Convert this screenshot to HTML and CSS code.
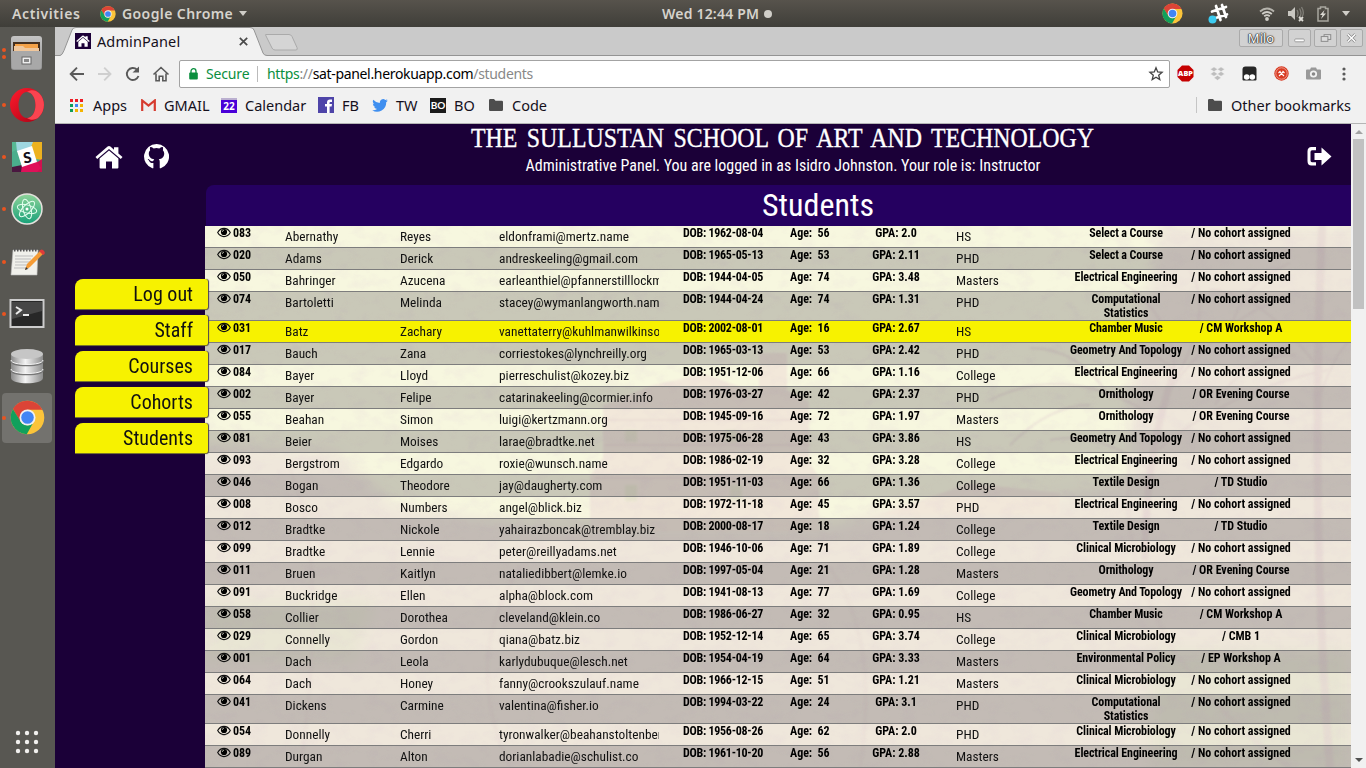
FILE: index.html
```html
<!DOCTYPE html>
<html lang="en">
<head>
<meta charset="utf-8">
<title>AdminPanel</title>
<link rel="stylesheet" href="styles.css">
</head>
<body>
<svg class="defs" width="0" height="0">
  <defs>
    <symbol id="chrome" viewBox="0 0 48 48">
      <circle cx="24" cy="24" r="23" fill="#fbc43a"/>
      <path d="M4 12.5A23 23 0 0 1 44.5 13.5H24L14 29.5Z" fill="#dc4437"/>
      <path d="M4 12.5L14.5 29.5A11 11 0 0 0 32 31L23 47A23 23 0 0 1 4 12.5Z" fill="#12a05c"/>
      <circle cx="24" cy="24" r="11" fill="#f1f1f1"/>
      <circle cx="24" cy="24" r="8.6" fill="#4285f4"/>
    </symbol>
    <symbol id="house" viewBox="0 0 28 24">
      <path d="M14 5.5L4.6 13.5V22.6a1 1 0 0 0 1 1H11V16.5h6V23.6h5.4a1 1 0 0 0 1-1V13.5Z"/>
      <path d="M12.6 1.600a2.200 2.200 0 0 1 2.800 0L19 4.700V2.300h4.400V8.400l4.100 3.500-1.700 2L14 3.900 2.200 13.900.5 11.900Z"/>
    </symbol>
    <symbol id="eye" viewBox="0 0 14 10">
      <path d="M.7 5Q3 .9 7 .9T13.300 5Q11 9.100 7 9.100T.7 5Z" fill="none" stroke="#111" stroke-width="1.150"/>
      <circle cx="7" cy="4.500" r="3.100" fill="#000"/>
      <path d="M5.300 4.300Q5.400 2.900 6.900 2.700" fill="none" stroke="#e8e8d8" stroke-width=".8"/>
    </symbol>
    <symbol id="folder" viewBox="0 0 14 12"><path d="M1.200 0H5l1.500 1.800h6.300A1.200 1.200 0 0 1 14 3v7.800A1.200 1.200 0 0 1 12.800 12H1.200A1.200 1.200 0 0 1 0 10.800V1.200A1.200 1.200 0 0 1 1.200 0Z" fill="#4d4d4d"/></symbol>
    <linearGradient id="metal" x1="0" x2="1"><stop offset="0" stop-color="#8a8a8a"/><stop offset=".45" stop-color="#f4f4f4"/><stop offset="1" stop-color="#8c8c8c"/></linearGradient>
    <linearGradient id="steel" x2="0" y2="1"><stop offset="0" stop-color="#c4c4c4"/><stop offset="1" stop-color="#929292"/></linearGradient>
    <linearGradient id="red" x2="1" y2="1"><stop offset="0" stop-color="#ff1b2d"/><stop offset="1" stop-color="#a70014"/></linearGradient>
    <linearGradient id="atom" x2="0" y2="1"><stop offset="0" stop-color="#8fd49a"/><stop offset="1" stop-color="#18a179"/></linearGradient>
  </defs>
</svg>

<div class="topbar">
  <span class="activities">Activities</span>
  <svg class="tb-chrome" width="16" height="16"><use href="#chrome"/></svg>
  <span class="appname">Google Chrome</span>
  <i class="caret"></i>
  <span class="clock">Wed 12:44 PM</span><i class="clock-dot"></i>
  <div class="tray">
    <svg class="t1" width="21" height="21"><use href="#chrome"/></svg>
    <svg class="t2" width="21" height="21" viewBox="0 0 21 21"><g stroke="#fff" stroke-width="2.700" stroke-linecap="round"><path d="M8 3l4.500 14M14 2l4 12M4 8.500l14-4.500M6 15.500l13-4"/></g><circle cx="4.500" cy="16.500" r="4" fill="#3ccbf0"/></svg>
    <svg class="t3" width="16" height="14" viewBox="0 0 16 14" fill="none" stroke="#d0cec8" stroke-width="1.800"><path d="M1 4.500Q8-1.500 15 4.500" stroke="#b5b3ac"/><path d="M3.200 7Q8 3 12.800 7M5.200 9.300Q8 7 10.800 9.300"/><circle cx="8" cy="12" r="1" fill="#d0cec8"/></svg>
    <svg class="t4" width="18" height="16" viewBox="0 0 18 16"><path d="M1 5h3l4-4v13l-4-4H1Z" fill="#c9c7c1"/><path d="M10 4q2 3 0 7M12.500 2.500q3 5 0 9M14.500 1q3 5 1 9" stroke="#817f78" fill="none" stroke-width="1.300"/><path d="M12 11l4 4m0-4l-4 4" stroke="#dedcd6" stroke-width="1.800"/></svg>
    <svg class="t5" width="12" height="16" viewBox="0 0 12 16"><path d="M1 2.500h2.500V1h5v1.500H11V15H1Z" fill="none" stroke="#a8a69f" stroke-width="1.500"/><path d="M7.500 4L3 9h2.500L4 13l5-5.500H6.300Z" fill="#dddbd5"/></svg>
    <i class="caret t6"></i>
  </div>
</div>

<div class="desktop">
  <nav class="dock">
    <div class="app two"><svg width="34" height="36" viewBox="0 0 34 36"><rect x="1" y="1" width="31" height="34" rx="3" fill="url(#steel)"/><rect x="3" y="7" width="27" height="10" fill="#46301f"/><path d="M5 9h23v6H5Z" fill="#f5a248"/><path d="M4 11h9l2 2h14v4H4Z" fill="#f0c79c"/><rect x="2" y="16" width="29" height="18" rx="1.500" fill="#a8a8a8"/><rect x="12" y="22" width="9" height="7" fill="#eee" stroke="#666"/><rect x="14" y="24" width="5" height="3" fill="#888"/></svg></div>
    <div class="app dot"><svg width="36" height="36" viewBox="0 0 36 36"><path fill-rule="evenodd" fill="url(#red)" d="M18 1a17 17 0 1 0 0 34A17 17 0 1 0 18 1ZM18 5c5 0 8.500 6 8.500 13s-3.500 13-8.500 13-8.500-6-8.500-13S13 5 18 5Z"/><path d="M18 5c5 0 8.500 6 8.500 13s-3.500 13-8.500 13c4 3 9 2 12-1a17 17 0 0 0 0-24c-3-3-8-4-12-1Z" fill="#fb4450"/></svg></div>
    <div class="app dot"><svg width="30" height="30" viewBox="0 0 30 30"><rect width="30" height="30" rx="2" fill="#4aae8c"/><path d="M0 0h9l-3 7-6 3Z" fill="#57b894"/><path d="M4 0h18l-2 6-15 4Z" fill="#9ed7e0"/><path d="M21 0h9v18l-6-1-5-12Z" fill="#edb21f"/><path d="M30 17v13H19l5-9Z" fill="#cf124f"/><path d="M8 24l16-6 5 8-4 4H9Z" fill="#df1159"/><path d="M0 25l10-2-1 7H0Z" fill="#4a1740"/><path d="M5 9l15-5 5 16-15 5Z" fill="#fff"/></svg><b class="slack-s">S</b></div>
    <div class="app dot"><svg width="32" height="32" viewBox="0 0 32 32"><circle cx="16" cy="16" r="15" fill="url(#atom)" stroke="#e5e2de" stroke-width="1.500"/><g fill="none" stroke="#e5fff0" stroke-width="1"><ellipse cx="16" cy="16" rx="10" ry="4" transform="rotate(15 16 16)"/><ellipse cx="16" cy="16" rx="10" ry="4" transform="rotate(75 16 16)"/><ellipse cx="16" cy="16" rx="10" ry="4" transform="rotate(135 16 16)"/></g><circle cx="16" cy="16" r="1.500" fill="#fff"/></svg></div>
    <div class="app dot"><svg width="36" height="30" viewBox="0 0 36 30"><path d="M4 3h25l-1 25H2Z" fill="#f0f0eb" stroke="#bbb" stroke-width=".6"/><path d="M5 3h23" stroke="#555" stroke-width="3" stroke-dasharray="1.500 1.500"/><path d="M6 9h18M6 12h16M6 15h18M6 18h12M5 21h15" stroke="#bdbdbd"/><path d="M16 23l2-6L31 4l3 3-13 13Z" fill="#f59b35"/><path d="M30 4q3-3 5 0t-1 4Z" fill="#df3b3b"/><path d="M16 23l1-3 2 2Z" fill="#333"/></svg></div>
    <div class="app dot"><svg width="36" height="30" viewBox="0 0 36 30"><rect x="1.500" y="1" width="33" height="27" fill="#272727" stroke="#ccc" stroke-width="2"/><path d="M3 3h30v9L3 20Z" fill="#464646"/><path d="M7 8l5 3-5 4M14 16h6" stroke="#e9e9e9" stroke-width="2" fill="none"/></svg></div>
    <div class="app"><svg width="34" height="36" viewBox="0 0 34 36"><path d="M1 6v24c0 7 32 7 32 0V6Z" fill="url(#metal)"/><path d="M1 13c0 6 32 6 32 0M1 22c0 6 32 6 32 0" stroke="#777" stroke-width="1.600" fill="none"/><path d="M1 12c0 6 32 6 32 0M1 21c0 6 32 6 32 0" stroke="#f4f4f4" fill="none"/><ellipse cx="17" cy="6" rx="16" ry="5" fill="#c6c6c6"/></svg></div>
    <div class="app dot active"><svg width="35" height="35"><use href="#chrome"/></svg></div>
    <svg class="grid9" width="24" height="24" viewBox="0 0 24 24" fill="#f2f1ef"><circle cx="3" cy="3" r="2.200"/><circle cx="12" cy="3" r="2.200"/><circle cx="21" cy="3" r="2.200"/><circle cx="3" cy="12" r="2.200"/><circle cx="12" cy="12" r="2.200"/><circle cx="21" cy="12" r="2.200"/><circle cx="3" cy="21" r="2.200"/><circle cx="12" cy="21" r="2.200"/><circle cx="21" cy="21" r="2.200"/></svg>
  </nav>

  <main class="browser">
    <div class="tabstrip">
      <svg class="tabshape" width="250" height="29" viewBox="0 0 250 29"><path d="M0 29V28.500Q2 28.500 4 23.500L12 3q1-2.500 4-2.500H190q3 0 4 2.500l9 23q1 2.500 4 2.500h43V29Z" fill="#f1f1f1"/><path d="M0 28.500Q2 28.500 4 23.500L12 3q1-2.500 4-2.500H190q3 0 4 2.500l9 23q1 2.500 4 2.500h43" fill="none" stroke="#949494"/><path d="M206 7.500h23q2 0 3 2l5 11q1 2.500-1 2.500H215q-2 0-3-2l-6-12q-1-2 0-1.500Z" fill="#d5d5d5" stroke="#aaa"/></svg>
      <span class="favicon"><svg width="14" height="12" fill="#fff"><use href="#house"/></svg></span>
      <span class="tabtitle">AdminPanel</span>
      <svg class="tabx" width="9" height="9" viewBox="0 0 9 9" stroke="#4a4a4a" stroke-width="1.700"><path d="M.8.800l7.400 7.400M8.200.800L.8 8.200"/></svg>
      <div class="wincontrols"><span class="milo">Milo</span>
        <span class="wbtn"><svg width="22" height="16" viewBox="0 0 22 16"><rect x="6" y="9" width="10" height="3" rx="1" fill="#fff" stroke="#999" stroke-width="1"/></svg></span>
        <span class="wbtn"><svg width="22" height="16" viewBox="0 0 22 16" fill="#ddd" stroke="#888"><rect x="9.500" y="4.500" width="7" height="5"/><rect x="6.500" y="6.500" width="7" height="5"/></svg></span>
        <span class="wbtn"><svg width="22" height="16" viewBox="0 0 22 16"><path d="M7 4l8 8M15 4l-8 8" stroke="#888" stroke-width="3"/><path d="M7 4l8 8M15 4l-8 8" stroke="#fff" stroke-width="1.500"/></svg></span></div>
    </div>
    <div class="toolbar">
      <svg class="nav" width="104" height="20" viewBox="0 0 104 20" fill="none" stroke="#5a5a5a" stroke-width="1.900"><path d="M17 10H4M10 3.700L3.700 10 10 16.300"/><path d="M31 10h12M37.200 3.700L43.500 10l-6.300 6.300" stroke="#cfcfcf"/><path d="M70 5.600A6 6 0 1 0 71.500 12"/><path d="M65.500 8.500H72V2.500Z" fill="#5a5a5a" stroke="none"/><path d="M86.500 10.500L94 3.500l7.500 7M89 9.500v7.300h3.200v-4.500h3.600v4.500H99V9.500" stroke-width="1.600"/></svg>
      <div class="omnibox">
        <svg width="9" height="12" viewBox="0 0 9 12"><path d="M2 5V3.200a2.500 2.500 0 0 1 5 0V5" fill="none" stroke="#0a8f3e" stroke-width="1.300"/><rect x="0.200" y="4.500" width="8.600" height="7" rx="1" fill="#0a8f3e"/></svg>
        <span class="secure">Secure</span><i class="sep"></i>
        <span class="url"><span class="g">https</span><span class="gr">://</span>sat-panel.herokuapp.com<span class="gr">/students</span></span>
        <svg class="star" width="16" height="16" viewBox="0 0 16 16"><path d="M8 1.800l1.700 4.100 4.400.4-3.400 2.900 1.100 4.400L8 11.300l-3.800 2.300 1.100-4.400L1.900 6.300l4.400-.4Z" fill="none" stroke="#444" stroke-width="1.300"/></svg>
      </div>
      <div class="exts">
        <svg width="17" height="17" viewBox="0 0 17 17"><path d="M5 .5h7L16.500 5v7L12 16.500H5L.5 12V5Z" fill="#c60000"/><text x="8.500" y="11.300" text-anchor="middle" font-family="Open Sans" font-weight="800" font-size="7.300" fill="#fff">ABP</text></svg>
        <svg width="15" height="14" viewBox="0 0 15 14" fill="#bdbdbd"><path d="M4 0l3.500 2.300L4 4.600.5 2.300ZM11 0l3.500 2.300L11 4.600 7.500 2.300ZM4 4.600l3.500 2.300L4 9.200.5 6.900ZM11 4.600l3.500 2.300L11 9.200 7.500 6.900ZM7.500 8.500l3.500 2.300-3.500 2.500L4 10.800Z" stroke="#f1f1f1" stroke-width=".4"/></svg>
        <svg width="15" height="15" viewBox="0 0 15 15"><path d="M3.500.5h8q3 0 3 3v10q0 1-1 1h-12q-1 0-1-1v-10q0-3 3-3Z" fill="#272727"/><circle cx="4.700" cy="11" r="2.800" fill="#fff"/><circle cx="10.300" cy="11" r="2.800" fill="#fff"/></svg>
        <svg width="15" height="15" viewBox="0 0 15 15"><circle cx="7.500" cy="7.500" r="7.200" fill="#d83a22"/><circle cx="7.500" cy="7.500" r="5.700" fill="none" stroke="#f3b3a5" stroke-width=".8"/><path d="M5 10l4.500-4.500m.5 4.500L5.500 5.500M4.500 7l2-2m4 2l-2-2" stroke="#fff" stroke-width="1.100"/></svg>
        <svg width="15" height="13" viewBox="0 0 15 13"><path d="M1 2.500h3L5 .5h5l1 2h3q1 0 1 1v8q0 1-1 1H1q-1 0-1-1v-8q0-1 1-1Z" fill="#999"/><circle cx="7.500" cy="7" r="3.600" fill="#f1f1f1"/><circle cx="7.500" cy="7" r="1.800" fill="#888"/></svg>
        <svg class="dots" width="4" height="14" viewBox="0 0 4 14" fill="#5a5a5a"><circle cx="2" cy="2" r="1.600"/><circle cx="2" cy="7" r="1.600"/><circle cx="2" cy="12" r="1.600"/></svg>
      </div>
    </div>
    <div class="bookmarks">
      <span class="bm b1"><svg width="13" height="13" viewBox="0 0 13 13"><path d="M0 1.500h13" stroke="#ee1c25" stroke-width="3" stroke-dasharray="3 2"/><path d="M0 6.500h3" stroke="#0f9d58" stroke-width="3"/><path d="M5 6.500h3" stroke="#4285f4" stroke-width="3"/><path d="M10 6.500h3" stroke="#f4b400" stroke-width="3"/><path d="M0 11.500h3" stroke="#0f9d58" stroke-width="3"/><path d="M5 11.500h8" stroke="#f4b400" stroke-width="3" stroke-dasharray="3 2"/></svg><span>Apps</span></span>
      <span class="bm b2"><svg width="15" height="12" viewBox="0 0 15 12"><rect width="15" height="12" rx="1" fill="#eee"/><path d="M1.200 12V1.500l6.300 5 6.300-5V12" fill="none" stroke="#d63b2f" stroke-width="2.200"/></svg><span>GMAIL</span></span>
      <span class="bm b3"><svg width="16" height="15" viewBox="0 0 16 15"><path d="M0 1h16v14H0Z" fill="#4a00d8"/><path d="M0 0h16v2H0Z" fill="#bbb0d0"/><text x="8" y="12" text-anchor="middle" font-family="Open Sans" font-weight="700" font-size="10" fill="#fff">22</text></svg><span>Calendar</span></span>
      <span class="bm b4"><svg width="16" height="16" viewBox="0 0 16 16"><rect width="16" height="16" fill="#4e44a8"/><path d="M9 16V9.500H7V7h2V5.500Q9 2.500 12 2.500h2V5h-1.500q-1 0-1 1v1H14l-.4 2.500h-2V16Z" fill="#fff"/></svg><span>FB</span></span>
      <span class="bm b5"><svg width="16" height="13" viewBox="0 0 24 20"><path d="M24 2.400a10 10 0 0 1-2.800.8A5 5 0 0 0 23.300.4a10 10 0 0 1-3.100 1.200 5 5 0 0 0-8.400 4.500A14 14 0 0 1 1.700 1a5 5 0 0 0 1.500 6.500 5 5 0 0 1-2.200-.6 5 5 0 0 0 4 4.900 5 5 0 0 1-2.200.1 5 5 0 0 0 4.600 3.400A10 10 0 0 1 0 17.400 14 14 0 0 0 21.500 4.900 10 10 0 0 0 24 2.400Z" fill="#3f8ff0"/></svg><span>TW</span></span>
      <span class="bm b6"><svg width="16" height="15" viewBox="0 0 16 15"><rect width="16" height="15" fill="#1b1b1b"/><text x="8" y="11.300" text-anchor="middle" font-family="Lato" font-weight="700" font-size="10" fill="#fff">BO</text></svg><span>BO</span></span>
      <span class="bm b7"><svg width="14" height="12"><use href="#folder"/></svg><span>Code</span></span>
      <span class="bm other"><svg width="14" height="12"><use href="#folder"/></svg><span>Other bookmarks</span></span>
    </div>

    <div class="viewport">
      <div class="page">
        <header class="sitehead">
          <div class="headicons"><svg width="28" height="24" fill="#fff"><use href="#house"/></svg>
            <svg width="25" height="25" viewBox="0 0 24 24"><path fill="#fff" d="M12 0a12 12 0 0 0-4 23.300c.8.200 1-.2 1-.6v-4.500c-2.200.3-3.200-.4-4-2-.3-.6-1-1-1.200-1.300-.5-.4.5-.6 1.100-.1 1 .7 1.200 2.200 4 1.500.1-.8.500-1.300 1-1.600-3.300-.4-5.300-2-5.300-5.500 0-1.300.5-2.400 1.300-3.300-.3-1-.3-2 .1-3 1.300 0 2.300.6 3.200 1.300a12 12 0 0 1 5.600 0c.9-.7 1.900-1.300 3.200-1.300.4 1 .4 2 .1 3 .8.900 1.300 2 1.300 3.300 0 3.500-2 5.100-5.300 5.500.7.500 1 1.300 1 2.400v5.600c0 .4.200.8 1 .6A12 12 0 0 0 12 0Z"/></svg></div>
          <div class="headtext">
            <svg class="title" width="626" height="32" viewBox="0 0 626 32"><text x="1" y="23" textLength="623" lengthAdjust="spacingAndGlyphs">THE SULLUSTAN SCHOOL OF ART AND TECHNOLOGY</text></svg>
            <p class="sub">Administrative Panel. You are logged in as Isidro Johnston. Your role is: Instructor</p>
          </div>
          <svg class="logout" width="25" height="19" viewBox="0 0 25 19" fill="#fff"><path d="M9 0v3.200H5Q3.500 3.200 3.500 5v8.500q0 1.800 1.500 1.800h4v3.200H4.500Q.5 18.500.5 14V4.500Q.5 0 4.500 0Z"/><path d="M14.500.500L24.500 9.500 14.500 18.500V13H7.500V6h7Z"/></svg>
        </header>
        <div class="body">
          <nav class="side"><a>Log out</a><a>Staff</a><a>Courses</a><a>Cohorts</a><a>Students</a></nav>
          <section class="content">
            <h2><span>Students</span></h2>
            <div class="rows">
              <svg class="photo" width="1146" height="542" viewBox="205 226 1146 542" preserveAspectRatio="none">
                <defs><filter id="soft" x="-10%" y="-10%" width="120%" height="120%"><feGaussianBlur stdDeviation="7"/></filter><filter id="soft1"><feGaussianBlur stdDeviation=".8"/></filter>
                <filter id="grain" x="0" y="0" width="100%" height="100%"><feTurbulence type="fractalNoise" baseFrequency=".06 .09" numOctaves="4" seed="8"/><feColorMatrix values="0 0 0 0 .75  0 0 0 0 .62  0 0 0 0 .68  1.600 0 0 0 -.72"/></filter></defs>
                <rect x="205" y="226" width="1146" height="542" fill="#f7f7df"/>
                <path d="M205 445l130 5 60 55 140 20 300 0 65-20 100 0 130-20 0-110 20-100 10-50 240 0v580H180V445Z" fill="#efe7db" filter="url(#soft)"/>
                <path d="M205 600h170l-20 60H205Z M1150 650h200v120h-200Z" fill="#e9e6d4" filter="url(#soft)"/>
                <g fill="#f2e8da" filter="url(#soft1)"><path d="M603 405l50-20 52-11 44 16 10 0v-37h28v37l22 12v60l10 15v55H590v-55l13-20Z"/><path d="M880 515l90-32 90 10v22Z"/><path d="M605 445h205M595 478h220M605 420h205" stroke="#ecddd5" stroke-width="2"/><path d="M625 430h12v12h-12ZM725 430h12v12h-12ZM625 485h12v16h-12ZM730 485h12v16h-12Z" fill="#e8e5cf"/></g>
                <g stroke="#e5d6d2" fill="none" opacity=".6" filter="url(#soft1)"><path d="M1330 768q-20-250-8-542" stroke-width="8"/><path d="M1145 560q0-110 30-190" stroke-width="7"/><path d="M1175 370q-60-50-150-45M1170 390q50-70 110-90M1160 420q-90-60-170-20M1158 450q70-60 170-80M1174 370q0-60-70-100M1175 380q40-70 15-110M1320 370q-60-80-110-80M1315 410q20-60 36-70M1150 470q-50-40-100-30M1110 398q-30-50-80-50M1230 333q10-50 60-70M1090 405q-40 0-80 40M1215 405q30-50 80-50" stroke-width="1.800"/><path d="M300 768q30-200-10-300M510 768q-50-110 10-200M860 768q20-130-30-200M1290 768q-180-130-160-310" stroke-width="4" opacity=".4"/></g>
                <path d="M1020 226h331v330h-290Z M205 430h130l60 75H205Z M205 520h1146v248H205Z" filter="url(#grain)" opacity=".28"/>
              </svg>
              <div class="list" id="list"></div>
            </div>
          </section>
        </div>
      </div>
      <div class="scroll"><i class="up"></i><i class="thumb"></i><i class="down"></i></div>
    </div>
  </main>
</div>
<script src="rows.js"></script>
</body>
</html>
```
FILE: styles.css
```css
* { box-sizing: border-box; }
html, body { margin: 0; height: 768px; overflow: hidden; }
body { font-family: "Noto Sans", sans-serif; font-size: 14.500px; color: #15101c; }
.defs { position: absolute; }
svg { flex: none; display: block; }
i { flex: none; }

.topbar { height: 27px; display: flex; align-items: center; position: relative; background: linear-gradient(#57534c, #3f3e39); color: #d6d3cc; font-weight: 600; font-size: 14px; padding-left: 12px; }
.activities { width: 89px; letter-spacing: .6px; }
.tb-chrome { margin: 0 6px 0 -1px; }
.appname { width: 113px; white-space: nowrap; letter-spacing: .4px; }
.caret { border: 4.500px solid transparent; border-top: 5px solid #d0cec8; border-bottom: 0; margin-left: 4px; }
.clock { margin-left: 415px; width: 98px; white-space: nowrap; letter-spacing: .2px; }
.clock-dot { width: 8px; height: 8px; border-radius: 50%; background: #d0cec8; margin-left: 4px; }
.tray { margin-left: auto; display: flex; align-items: center; padding-right: 16px; }
.t1 { margin-right: 25px; } .t2 { margin-right: 30px; } .t3 { margin-right: 12px; } .t4 { margin-right: 12px; } .t5 { margin-right: 9px; }

.desktop { display: flex; height: 741px; }
.dock { width: 55px; background: #585752; display: flex; flex-direction: column; align-items: center; position: relative; padding: 1px 1px 0 0; }
.app { height: 50px; width: 50px; margin-bottom: 2.150px; display: flex; align-items: center; justify-content: center; position: relative; border-radius: 4px; }
.app.active { background: #73726e; }
.dot::before, .two::before { content: ""; position: absolute; left: 0; top: 23px; width: 4px; height: 4px; border-radius: 50%; background: #e95420; }
.two::before { top: 20px; box-shadow: 0 7px #e95420; }
.slack-s { position: absolute; font: 900 15px Lato, sans-serif; transform: rotate(-8deg); }
.grid9 { margin-top: auto; margin-bottom: 14px; }

.browser { flex: 1; min-width: 0; display: flex; flex-direction: column; background: #f1f1f1; }
.tabstrip { height: 29px; background: #cacaca; border-bottom: 1px solid #949494; display: flex; align-items: center; position: relative; }
.tabshape { position: absolute; left: 5px; top: 0; }
.favicon { position: relative; width: 16px; height: 16px; background: #1c0038; margin-left: 20px; display: flex; align-items: center; justify-content: center; }
.tabtitle { position: relative; margin-left: 6px; width: 142px; letter-spacing: .1px; }
.tabx { position: relative; }
.wincontrols { margin-left: auto; display: flex; gap: 3px; padding-right: 3px; margin-bottom: 7px; margin-top: 1px; }
.milo, .wbtn { height: 18px; border: 1px solid #aaa; border-radius: 2px; background: #d2d2d2; }
.milo { width: 44px; margin-right: 2px; text-align: center; font-size: 13px; line-height: 16px; color: #fff; text-shadow: 0 0 1px #222, 0 0 1px #222, 0 0 2px #333, 0 0 1px #333; }
.wbtn { width: 23px; } .wbtn svg { width: 21px; }
.toolbar { height: 36px; display: flex; align-items: center; padding: 0 0 1px 12px; }
.nav { margin-right: 8px; }
.omnibox { width: 991px; height: 28px; background: #fff; border: 1px solid #a3a3a3; border-radius: 2px; display: flex; align-items: center; padding: 0 5px 0 9px; white-space: nowrap; font-size: 14px; }
.secure { color: #0a8f3e; margin-left: 8px; width: 43px; letter-spacing: -.15px; }
.sep { width: 1px; height: 16px; background: #bbb; margin: 0 9px 0 8px; }
.g { color: #0a8f3e; } .gr { color: #888; }
.url { letter-spacing: -.33px; color: #000; }
.star { margin-left: auto; }
.exts { display: flex; align-items: center; margin-left: 7px; gap: 17px; }
.exts svg:nth-child(2) { margin-left: -1px; }
.dots { margin-left: 4px; }
.bookmarks { height: 32px; border-bottom: 1px solid #b5b5b5; display: flex; align-items: center; padding: 0 14px 5px 15px; }
.bm { display: flex; align-items: center; white-space: nowrap; }
.bm svg { margin-right: 8px; }
.b1 { width: 71px; } .b1 svg { margin-right: 10px; }
.b2 { width: 80px; } .b3 { width: 97px; } .b4 { width: 54px; } .b5 { width: 58px; } .b6 { width: 59px; }
.b7 svg { margin-right: 9px; }
.other { margin-left: auto; border-left: 1px solid #c5c5c5; padding-left: 11px; height: 16px; margin-right: 1px; }
.other svg { margin-right: 9px; }

.viewport { flex: 1; min-height: 0; display: flex; overflow: hidden; }
.page { width: 1296px; background: #1b0038; font-family: "Roboto Condensed", Roboto, sans-serif; font-stretch: condensed; }
.sitehead { height: 61px; display: grid; grid-template-columns: 256px 1fr 96px; color: #fff; }
.headicons { display: flex; gap: 21px; padding: 20px 0 0 40px; align-items: center; height: 45px; }
.headtext { display: flex; flex-direction: column; align-items: center; }
.title text { font: 27px "Liberation Serif", serif; word-spacing: 4px; fill: #fff; stroke: #fff; stroke-width: .35px; }
.sub { margin: 0; font-size: 16px; line-height: 20px; white-space: nowrap; }
.logout { margin: 23px 0 0 52px; }
.body { display: flex; }
.side { width: 150px; padding: 94px 0 0 20px; display: flex; flex-direction: column; gap: 5px; position: relative; z-index: 1; }
.side a { width: 133px; height: 31px; background: #f7f200; border-radius: 8px 3px 3px 0; border-bottom: 1px solid #78722a; box-shadow: 1px 0 1px #4a3f50; font-size: 20px; line-height: 30px; text-align: right; padding-right: 15px; color: #111; }
.content { flex: 1; min-width: 0; }
h2 { margin: 0 0 0 1px; height: 41px; background: #250060; border-radius: 8px 0 0 0; color: #fff; font-weight: 400; font-size: 32px; line-height: 40px; text-align: center; padding-left: 79px; }
.rows { position: relative; height: 542px; overflow: hidden; }
.photo { position: absolute; left: 0; top: 0; }
.list { position: relative; color: #111; }
.row { display: grid; grid-template-columns: 80px 115px 99px 160px 128px 49px 120px 112px 116px 114px; height: 22px; border-bottom: 1px solid #7d7d7d; white-space: nowrap; font-size: 13.330px; line-height: 22px; }
.row.tall { height: 29px; }
.row:nth-child(even) { background: rgba(15, 10, 25, .195); }
.row.sel { background: #f7f200; }
.row .b { font-weight: 700; font-size: 12px; line-height: 14px; text-align: center; color: #000; letter-spacing: -.03px; }
.row .course { letter-spacing: -.1px; }
.row .dob { letter-spacing: -.26px; }
.row .id { display: flex; align-items: flex-start; padding-left: 11px; }
.id svg { margin: 1px 2px 0 1px; }
.row .age { text-align: left; padding-left: 3px; white-space: pre; }
.mail { overflow: hidden; height: 22px; }

.scroll { width: 15px; background: #f1f1f1; display: flex; flex-direction: column; align-items: center; }
.up { border: 4px solid transparent; border-bottom-color: #a3a3a3; border-top: 0; margin-top: 6px; }
.thumb { width: 11px; height: 170px; background: #c1c1c1; margin-top: 5px; }
.down { border: 4px solid transparent; border-top-color: #505050; border-bottom: 0; margin-top: auto; margin-bottom: 6px; }
```
FILE: rows.js
```js
const N = "No cohort assigned", S = "Select a Course", EE = "Electrical Engineering", GT = "Geometry And Topology",
  CM = "Clinical Microbiology", CS = "Computational<br>Statistics", O = "Ornithology", T = "Textile Design", OE = "OR Evening Course";
const data = [
  ["083", "Abernathy", "Reyes", "eldonframi@mertz.name", "1962-08-04", 56, "2.0", "HS", S, N],
  ["020", "Adams", "Derick", "andreskeeling@gmail.com", "1965-05-13", 53, "2.11", "PHD", S, N],
  ["050", "Bahringer", "Azucena", "earleanthiel@pfannerstilllockm", "1944-04-05", 74, "3.48", "Masters", EE, N],
  ["074", "Bartoletti", "Melinda", "stacey@wymanlangworth.nam", "1944-04-24", 74, "1.31", "PHD", CS, N],
  ["031", "Batz", "Zachary", "vanettaterry@kuhlmanwilkinso", "2002-08-01", 16, "2.67", "HS", "Chamber Music", "CM Workshop A"],
  ["017", "Bauch", "Zana", "corriestokes@lynchreilly.org", "1965-03-13", 53, "2.42", "PHD", GT, N],
  ["084", "Bayer", "Lloyd", "pierreschulist@kozey.biz", "1951-12-06", 66, "1.16", "College", EE, N],
  ["002", "Bayer", "Felipe", "catarinakeeling@cormier.info", "1976-03-27", 42, "2.37", "PHD", O, OE],
  ["055", "Beahan", "Simon", "luigi@kertzmann.org", "1945-09-16", 72, "1.97", "Masters", O, OE],
  ["081", "Beier", "Moises", "larae@bradtke.net", "1975-06-28", 43, "3.86", "HS", GT, N],
  ["093", "Bergstrom", "Edgardo", "roxie@wunsch.name", "1986-02-19", 32, "3.28", "College", EE, N],
  ["046", "Bogan", "Theodore", "jay@daugherty.com", "1951-11-03", 66, "1.36", "College", T, "TD Studio"],
  ["008", "Bosco", "Numbers", "angel@blick.biz", "1972-11-18", 45, "3.57", "PHD", EE, N],
  ["012", "Bradtke", "Nickole", "yahairazboncak@tremblay.biz", "2000-08-17", 18, "1.24", "College", T, "TD Studio"],
  ["099", "Bradtke", "Lennie", "peter@reillyadams.net", "1946-10-06", 71, "1.89", "College", CM, N],
  ["011", "Bruen", "Kaitlyn", "nataliedibbert@lemke.io", "1997-05-04", 21, "1.28", "Masters", O, OE],
  ["091", "Buckridge", "Ellen", "alpha@block.com", "1941-08-13", 77, "1.69", "College", GT, N],
  ["058", "Collier", "Dorothea", "cleveland@klein.co", "1986-06-27", 32, "0.95", "HS", "Chamber Music", "CM Workshop A"],
  ["029", "Connelly", "Gordon", "qiana@batz.biz", "1952-12-14", 65, "3.74", "College", CM, "CMB 1"],
  ["001", "Dach", "Leola", "karlydubuque@lesch.net", "1954-04-19", 64, "3.33", "Masters", "Environmental Policy", "EP Workshop A"],
  ["064", "Dach", "Honey", "fanny@crookszulauf.name", "1966-12-15", 51, "1.21", "Masters", CM, N],
  ["041", "Dickens", "Carmine", "valentina@fisher.io", "1994-03-22", 24, "3.1", "PHD", CS, N],
  ["054", "Donnelly", "Cherri", "tyronwalker@beahanstoltenber", "1956-08-26", 62, "2.0", "PHD", CM, N],
  ["089", "Durgan", "Alton", "dorianlabadie@schulist.co", "1961-10-20", 56, "2.88", "Masters", EE, N]
];
document.getElementById("list").innerHTML = data.map(d => `
<div class="row${d[8].startsWith("Comp") ? " tall" : ""}${d[0] === "031" ? " sel" : ""}">
<span class="b id"><svg width="14" height="11"><use href="#eye"/></svg>${d[0]}</span>
<span>${d[1]}</span><span>${d[2]}</span><span class="mail">${d[3]}</span>
<span class="b dob">DOB: ${d[4]}</span><span class="b age">Age:  ${d[5]}</span><span class="b">GPA: ${d[6]}</span>
<span class="level">${d[7]}</span><span class="b course">${d[8]}</span><span class="b">/ ${d[9]}</span>
</div>`).join("");
```
